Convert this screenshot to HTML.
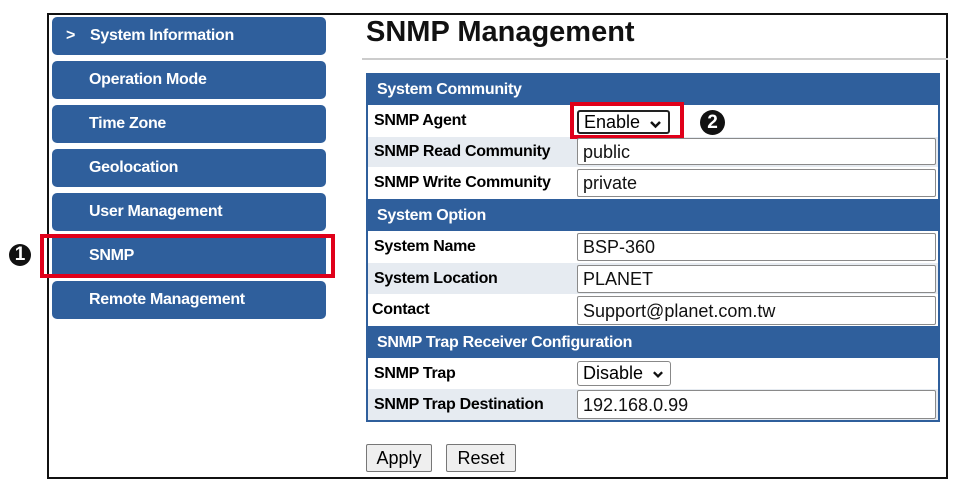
<!DOCTYPE html>
<html><head><meta charset="utf-8"><style>
*{margin:0;padding:0;box-sizing:border-box}
body{width:954px;height:499px;background:#fff;font-family:"Liberation Sans",Arial,sans-serif;position:relative;overflow:hidden}
.a{position:absolute}
.frame{left:47px;top:13px;width:901px;height:466px;border:2px solid #111}
.nav{left:52px;width:274px;height:38px;background:#2f5f9c;border-radius:5px;color:#fff;font-weight:bold;font-size:16px;line-height:38px;padding-left:37px;letter-spacing:-0.3px}
.red{border:4px solid #e0001a}
.num{background:#111;color:#fff;border-radius:50%;font-weight:bold;text-align:center;font-size:19px}
.hd{left:366px;width:574px;height:32px;background:#2f5f9c;color:#fff;font-weight:bold;font-size:16px;line-height:34px;padding-left:11px;letter-spacing:-0.3px}
.row{left:366px;width:574px;border-left:2px solid #2f5f9c;border-right:2px solid #2f5f9c;font-weight:bold;font-size:16px;padding-left:6px;letter-spacing:-0.3px}
.g{background:#e6ebf1}.w{background:#fff}
.in{left:577px;width:359px;border:1px solid #8a8a8a;border-radius:2px;background:#fff;font-size:18px;padding-left:5px;color:#111}
.sel{border:1px solid #555;border-radius:3px;background:#fff;font-size:18px;padding-left:5px}
.sel svg{position:absolute;right:6px;top:8px}
.btn{border:1px solid #777;border-radius:2px;background:#efefef;font-size:18px;text-align:center;line-height:27px}
</style></head><body>
<div class="a frame"></div>
<div class="a nav" style="top:17px;padding-left:38px"><span style="position:absolute;left:14px;top:0">&gt;</span>System Information</div>
<div class="a nav" style="top:61px">Operation Mode</div>
<div class="a nav" style="top:105px">Time Zone</div>
<div class="a nav" style="top:149px">Geolocation</div>
<div class="a nav" style="top:193px">User Management</div>
<div class="a nav" style="top:237px;border-radius:0">SNMP</div>
<div class="a nav" style="top:281px">Remote Management</div>
<div class="a red" style="left:40px;top:234px;width:295px;height:44px"></div>
<div class="a num" style="left:9px;top:244px;width:22px;height:22px;line-height:22px">1</div>

<div class="a" style="left:366px;top:16px;font-size:29px;font-weight:bold;color:#111">SNMP Management</div>
<div class="a" style="left:362px;top:58px;width:586px;height:2px;background:#ccc"></div>

<div class="a hd" style="top:73px">System Community</div>
<div class="a row w" style="top:105px;height:32px;line-height:32px">SNMP Agent</div>
<div class="a row g" style="top:137px;height:30px;line-height:30px">SNMP Read Community</div>
<div class="a row w" style="top:167px;height:32px;line-height:32px">SNMP Write Community</div>
<div class="a hd" style="top:199px">System Option</div>
<div class="a row w" style="top:231px;height:32px;line-height:32px">System Name</div>
<div class="a row g" style="top:263px;height:31px;line-height:31px">System Location</div>
<div class="a row w" style="top:294px;height:32px;line-height:32px;padding-left:4px">Contact</div>
<div class="a hd" style="top:326px">SNMP Trap Receiver Configuration</div>
<div class="a row w" style="top:358px;height:31px;line-height:31px">SNMP Trap</div>
<div class="a row g" style="top:389px;height:33px;line-height:32px;border-bottom:2px solid #2f5f9c">SNMP Trap Destination</div>

<div class="a sel" style="left:577px;top:110px;width:93px;height:24px;line-height:21px;border:2px solid #222">Enable <svg width="13" height="9" viewBox="0 0 13 9"><path d="M2 2 L6.5 6.5 L11 2" fill="none" stroke="#111" stroke-width="2.5"/></svg></div>
<div class="a red" style="left:570px;top:102px;width:114px;height:37px"></div>
<div class="a num" style="left:700px;top:110px;width:25px;height:25px;line-height:25px">2</div>
<div class="a in" style="left:577px;top:138px;height:27px;line-height:26px">public</div>
<div class="a in" style="top:169px;height:28px;line-height:27px">private</div>
<div class="a in" style="top:233px;height:28px;line-height:27px">BSP-360</div>
<div class="a in" style="top:265px;height:28px;line-height:27px">PLANET</div>
<div class="a in" style="top:296px;height:29px;line-height:28px">Support@planet.com.tw</div>
<div class="a sel" style="left:577px;top:361px;width:94px;height:25px;line-height:23px;border-color:#888">Disable <svg width="12" height="9" viewBox="0 0 13 9"><path d="M2 2 L6.5 6.5 L11 2" fill="none" stroke="#111" stroke-width="2.5"/></svg></div>
<div class="a in" style="top:390px;height:29px;line-height:28px">192.168.0.99</div>

<div class="a btn" style="left:366px;top:444px;width:66px;height:28px">Apply</div>
<div class="a btn" style="left:446px;top:444px;width:70px;height:28px">Reset</div>
</body></html>
